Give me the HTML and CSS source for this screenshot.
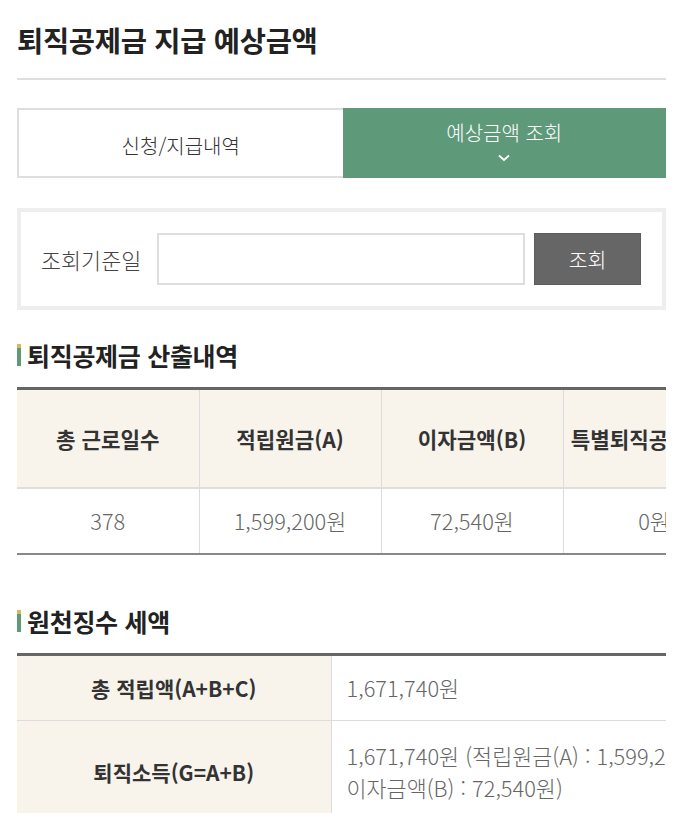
FILE: index.html
```html
<!DOCTYPE html>
<html lang="ko">
<head>
<meta charset="utf-8">
<link rel="stylesheet" href="styles.css">
</head>
<body>
<div class="page">
  <h1 class="title">퇴직공제금 지급 예상금액</h1>

  <div class="tabs">
    <div class="tab">신청/지급내역</div>
    <div class="tab tab-active">
      <span>예상금액 조회</span>
      <svg class="chev" width="12" height="8" viewBox="0 0 12 8"><path d="M1 1.5 L6 6 L11 1.5" fill="none" stroke="#fff" stroke-width="1.8"/></svg>
    </div>
  </div>

  <div class="search">
    <label class="search-label">조회기준일</label>
    <input class="search-input" type="text">
    <button class="search-btn">조회</button>
  </div>

  <h2 class="sec-title"><span class="bar"></span>퇴직공제금 산출내역</h2>
  <div class="scroll">
    <table class="calc">
      <thead>
        <tr>
          <th>총 근로일수</th>
          <th>적립원금(A)</th>
          <th>이자금액(B)</th>
          <th>특별퇴직공제금(C)</th>
        </tr>
      </thead>
      <tbody>
        <tr>
          <td>378</td>
          <td>1,599,200원</td>
          <td>72,540원</td>
          <td>0원</td>
        </tr>
      </tbody>
    </table>
  </div>

  <h2 class="sec-title sec-second"><span class="bar"></span>원천징수 세액</h2>
  <div class="scroll">
    <table class="tax">
      <tbody>
        <tr>
          <th>총 적립액(A+B+C)</th>
          <td>1,671,740원</td>
        </tr>
        <tr class="tall">
          <th>퇴직소득(G=A+B)</th>
          <td>1,671,740원 (적립원금(A) : 1,599,200원, 이자금액(B) : 72,540원)</td>
        </tr>
      </tbody>
    </table>
  </div>
</div>
</body>
</html>
```

FILE: styles.css
```css
* { box-sizing: border-box; }
html, body { margin: 0; padding: 0; background: #fff; }
body {
  font-family: "Noto Sans CJK KR", "Noto Sans", sans-serif;
  color: #222;
  overflow: hidden;
}
.page {
  padding: 0 16px 0 17px;
}
.title {
  margin: 0;
  padding-top: 19px;
  height: 80px;
  font-size: 28.5px;
  font-weight: 700;
  line-height: 42px;
  color: #222;
  border-bottom: 2px solid #dedede;
  letter-spacing: -0.3px;
}
.tabs {
  display: flex;
  margin-top: 28px;
  height: 70px;
}
.tab {
  flex: 1;
  display: flex;
  flex-direction: column;
  align-items: center;
  justify-content: center;
  font-size: 20px;
  font-weight: 300;
  color: #333;
  border: 2px solid #dedede;
  border-right: none;
  padding-top: 4px;
}
.tab-active {
  background: #5e9a7a;
  color: #fff;
  border: none;
  padding-top: 0;
  justify-content: flex-start;
}
.tab-active span {
  margin-top: 11px;
  line-height: 28px;
}
.chev { margin-top: 7px; }
.search {
  margin-top: 30px;
  border: 4px solid #eeeeee;
  height: 102px;
  display: flex;
  align-items: center;
  padding: 0 21px 0 20px;
}
.search-label {
  font-size: 21.8px;
  font-weight: 300;
  color: #444;
  margin-right: 16px;
  white-space: nowrap;
}
.search-input {
  flex: 1;
  min-width: 0;
  height: 52px;
  border: 2px solid #dedede;
  background: #fff;
  margin: 0 9px 0 0;
  outline: none;
}
.search-btn {
  flex: 0 0 107px;
  width: 107px;
  height: 52px;
  background: #666;
  border: 1px solid #5c5c5c;
  color: #fff;
  font-family: inherit;
  font-size: 20.5px;
  font-weight: 300;
  padding: 0;
}
.sec-title {
  display: flex;
  align-items: center;
  margin: 30px 0 0;
  height: 30px;
  font-size: 25px;
  font-weight: 700;
  color: #222;
  letter-spacing: -0.3px;
}
.sec-second { margin-top: 51px; }
.bar {
  width: 4px;
  height: 22px;
  margin-right: 6px;
  background: linear-gradient(#d8b857 0, #d8b857 4px, #5e9a7a 4px);
}
.scroll {
  overflow: hidden;
  margin-top: 17px;
}
table {
  border-collapse: collapse;
  table-layout: fixed;
}
.calc {
  width: 728px;
  border-top: 3px solid #666;
  border-bottom: 2px solid #888;
}
.calc th, .calc td {
  width: 182px;
  text-align: center;
  border-right: 1px solid #dcdcdc;
  padding: 0 6px;
  white-space: nowrap;
}
.calc th {
  height: 99px;
  background: #f8f4ec;
  color: #333;
  font-size: 21.2px;
  font-weight: 700;
  border-bottom: 2px solid #dedede;
}
.calc td {
  height: 66px;
  color: #666;
  font-size: 21.8px;
  font-weight: 300;
}
.tax {
  width: 760px;
  border-top: 3px solid #666;
}
.tax th {
  width: 314px;
  background: #f8f4ec;
  color: #333;
  font-size: 21px;
  font-weight: 700;
  text-align: center;
  border-right: 1px solid #dcdcdc;
  border-bottom: 1px solid #dcdcdc;
  height: 66px;
}
.tax td {
  width: 446px;
  padding: 0 15px;
  color: #666;
  font-size: 21.8px;
  font-weight: 300;
  line-height: 32px;
  word-break: keep-all;
  border-bottom: 1px solid #dcdcdc;
}
.tax tr.tall th, .tax tr.tall td { height: 104px; }
```
